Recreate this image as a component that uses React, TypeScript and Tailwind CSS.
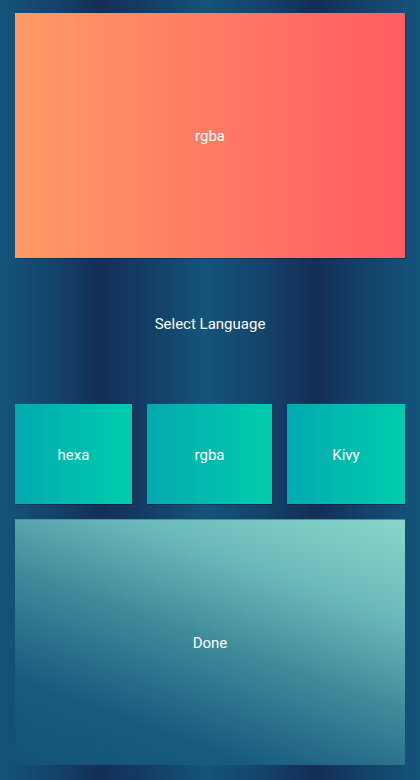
import React from "react";

export default function App() {
  return (
    <div
      className="w-[420px] h-[780px] flex flex-col px-[15px] pt-[13px] text-white text-[15px] leading-5 bg-[linear-gradient(90deg,#14547b_0%,#14446c_12%,#142e57_24%,#14426a_38%,#14547b_49%,#14446c_62%,#142e57_75%,#14426a_87%,#14547b_100%)]"
      style={{ fontFamily: "Roboto, 'Noto Sans', sans-serif" }}
    >
      <div className="h-[245px] flex items-center justify-center pt-px bg-[linear-gradient(90deg,#ff9a66,#ff5c62)] shadow-[1px_1px_0_rgba(0,0,0,0.25)]">
        rgba
      </div>
      <div className="h-[146px] flex justify-center pt-[56px]">
        <span>Select Language</span>
      </div>
      <div className="flex gap-[15px] h-[100px]">
        <div className="w-[117px] flex items-center justify-center pt-px bg-[linear-gradient(90deg,#03a9b0,#00cdad)] shadow-[1px_1px_0_rgba(0,0,0,0.25)]">
          hexa
        </div>
        <div className="w-[125px] flex items-center justify-center pt-px bg-[linear-gradient(90deg,#03a9b0,#00cdad)] shadow-[1px_1px_0_rgba(0,0,0,0.25)]">
          rgba
        </div>
        <div className="w-[118px] flex items-center justify-center pt-px bg-[linear-gradient(90deg,#03a9b0,#00cdad)] shadow-[1px_1px_0_rgba(0,0,0,0.25)]">
          Kivy
        </div>
      </div>
      <div className="mt-[15px] h-[246px] flex items-center justify-center border-t border-[#4c8fa0] bg-[linear-gradient(20deg,#145279_0%,#175a80_22%,#3f8a9a_50%,#6cbbbb_75%,#88d7c9_100%)]">
        Done
      </div>
    </div>
  );
}
